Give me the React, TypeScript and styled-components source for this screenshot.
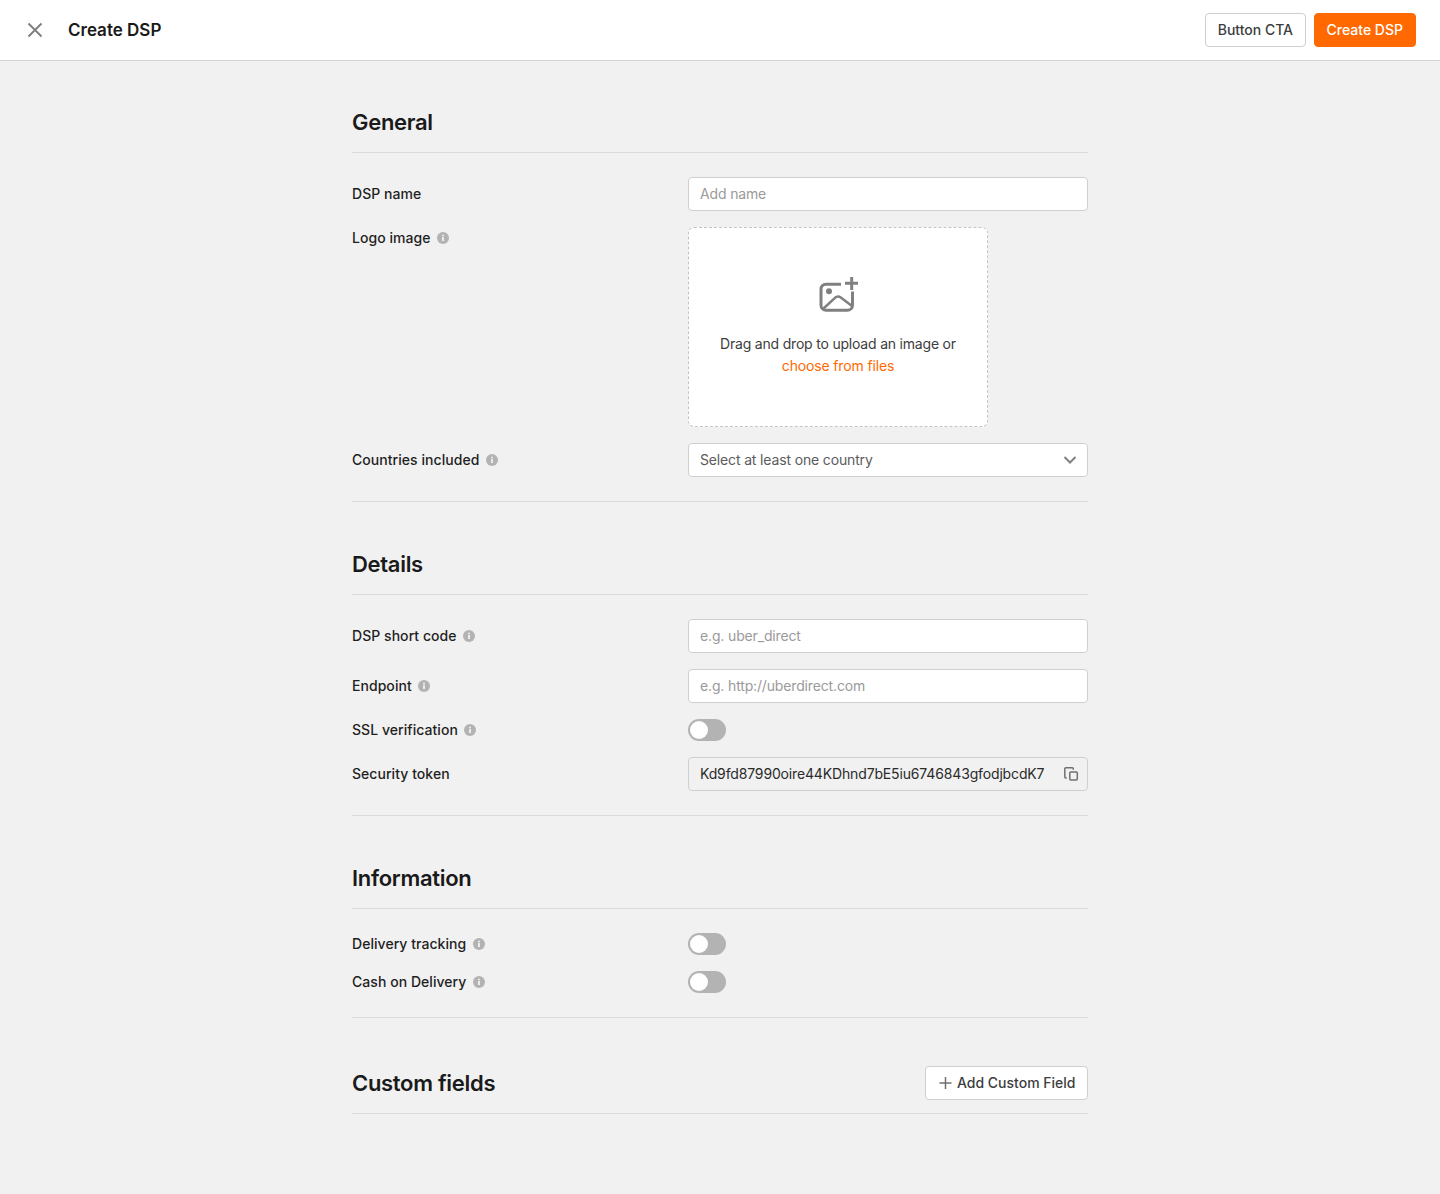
import React from "react";
import styled, { createGlobalStyle } from "styled-components";

const Global = createGlobalStyle`
  html, body { margin: 0; padding: 0; background: #f1f1f1; }
  body { font-family: Inter, "Liberation Sans", sans-serif; color: #1a1a1a; }
  * { box-sizing: border-box; }
`;

const Page = styled.div`
  min-height: 1194px;
  background: #f1f1f1;
`;

const TopBar = styled.header`
  height: 61px;
  background: #fff;
  border-bottom: 1px solid #d4d4d4;
  display: flex;
  align-items: center;
  padding: 0 24px;
`;

const CloseButton = styled.button`
  width: 22px;
  height: 22px;
  padding: 0;
  border: 0;
  background: none;
  display: flex;
  align-items: center;
  justify-content: center;
  margin-right: 22px;
`;

const PageTitle = styled.h1`
  margin: 0;
  flex: 1;
  font-size: 17px;
  line-height: 22px;
  font-weight: 600;
  color: #1a1a1a;
`;

const Actions = styled.div`
  display: flex;
  gap: 8px;
`;

const Button = styled.button<{ $primary?: boolean }>`
  height: 34px;
  padding: 0 ${(p) => (p.$primary ? 12 : 11.5)}px 1px;
  display: inline-flex;
  align-items: center;
  gap: 5px;
  border-radius: 4px;
  border: 1px solid ${(p) => (p.$primary ? "#ff6900" : "#cfcfcf")};
  background: ${(p) => (p.$primary ? "#ff6900" : "#fff")};
  color: ${(p) => (p.$primary ? "#fff" : "#3d3d3d")};
  font-family: inherit;
  font-size: 14px;
  font-weight: 500;
  white-space: nowrap;
`;

const PlusIcon = styled.svg`
  display: block;
  margin-top: 1px;
`;

const Main = styled.main`
  width: 736px;
  margin: 0 auto;
  padding-top: 46px;
`;

const Section = styled.section<{ $last?: boolean }>`
  padding-bottom: ${(p) => (p.$last ? 0 : 24)}px;
  margin-bottom: 47px;
  border-bottom: ${(p) => (p.$last ? "none" : "1px solid #dcdcdc")};
`;

const SectionHead = styled.div<{ $action?: boolean }>`
  display: flex;
  align-items: center;
  justify-content: space-between;
  padding-top: ${(p) => (p.$action ? 1 : 0)}px;
  padding-bottom: ${(p) => (p.$action ? 13 : 15)}px;
  border-bottom: 1px solid #dcdcdc;
`;

const SectionTitle = styled.h2`
  margin: 0;
  font-size: 22px;
  line-height: 30px;
  font-weight: 600;
  letter-spacing: -0.3px;
  color: #1a1a1a;
`;

const Rows = styled.div`
  margin-top: 24px;
  display: flex;
  flex-direction: column;
  gap: 16px;
`;

const Row = styled.div<{ $top?: boolean }>`
  display: grid;
  grid-template-columns: 336px 400px;
  align-items: ${(p) => (p.$top ? "start" : "center")};
`;

const Label = styled.label`
  display: flex;
  align-items: center;
  gap: 6.5px;
  font-size: 14px;
  line-height: 22px;
  font-weight: 500;
  letter-spacing: 0.05px;
  color: #1f1f1f;
`;

const InfoDot = styled.span`
  width: 12px;
  height: 12px;
  display: block;
`;

const Field = styled.div<{ $readonly?: boolean }>`
  height: 34px;
  display: flex;
  align-items: center;
  justify-content: space-between;
  padding: 0 8px 0 11px;
  border-radius: 4px;
  background: ${(p) => (p.$readonly ? "#f1f1f1" : "#fff")};
  border: 1px solid #cfcfcf;
  font-size: 14px;
`;

const tones = { placeholder: "#9a9a9a", muted: "#5c5c5c", value: "#2b2b2b" };

const FieldText = styled.span<{ $tone: keyof typeof tones }>`
  color: ${(p) => tones[p.$tone]};
  letter-spacing: -0.15px;
  line-height: 20px;
  padding-bottom: 1px;
`;

const Dropzone = styled.div`
  width: 300px;
  height: 200px;
  background: #fff;
  border: 1px dashed #c4c4c4;
  border-radius: 6px;
  display: flex;
  flex-direction: column;
  align-items: center;
  padding-top: 49px;
  font-size: 14px;
  line-height: 22px;
  letter-spacing: -0.2px;
  color: #3d3d3d;
  text-align: center;
`;

const DropIcon = styled.svg`
  display: block;
  margin-bottom: 20px;
  margin-left: 1px;
`;

const FileLink = styled.span`
  color: #ff6900;
  display: block;
  letter-spacing: -0.15px;
`;

const Toggle = styled.span`
  width: 38px;
  height: 22px;
  display: block;
  border-radius: 11px;
  background: #b3b3b3;
  padding: 2px;
`;

const Knob = styled.span`
  width: 18px;
  height: 18px;
  display: block;
  border-radius: 50%;
  background: #fff;
`;

const Info = () => (
  <InfoDot>
    <svg width="12" height="12" viewBox="0 0 12 12" style={{ display: "block" }}>
      <circle cx="6" cy="6" r="6" fill="#b3b3b3" />
      <rect x="5.25" y="5" width="1.5" height="4" fill="#fff" />
      <rect x="5.25" y="2.75" width="1.5" height="1.5" fill="#fff" />
    </svg>
  </InfoDot>
);

const Switch = () => (
  <Toggle>
    <Knob />
  </Toggle>
);

export default function App() {
  return (
    <Page>
      <Global />
      <TopBar>
        <CloseButton aria-label="Close">
          <svg width="22" height="22" viewBox="0 0 22 22" fill="none" stroke="#808080" strokeWidth="2">
            <path d="M4.5 4.5l13 13M17.5 4.5l-13 13" />
          </svg>
        </CloseButton>
        <PageTitle>Create DSP</PageTitle>
        <Actions>
          <Button>Button CTA</Button>
          <Button $primary>Create DSP</Button>
        </Actions>
      </TopBar>
      <Main>
        <Section>
          <SectionHead>
            <SectionTitle>General</SectionTitle>
          </SectionHead>
          <Rows>
            <Row>
              <Label>DSP name</Label>
              <Field>
                <FieldText $tone="placeholder">Add name</FieldText>
              </Field>
            </Row>
            <Row $top>
              <Label>
                Logo image <Info />
              </Label>
              <Dropzone>
                <DropIcon width="40" height="36" viewBox="0 0 40 36" fill="none" stroke="#808080" strokeWidth="3">
                  <path d="M22 7.2H7a5 5 0 0 0-5 5v16a5 5 0 0 0 5 5h21.500a5 5 0 0 0 5-5V14.500" />
                  <path d="M4.500 31.500L16 20.800c1.800-1.600 4-1.600 5.800-.2L33 29" strokeWidth="2.500" />
                  <circle cx="10" cy="14.300" r="3" fill="#808080" stroke="none" />
                  <path d="M32.700 0v13M26 6.300h13" />
                </DropIcon>
                <div>Drag and drop to upload an image or</div>
                <FileLink>choose from files</FileLink>
              </Dropzone>
            </Row>
            <Row>
              <Label>
                Countries included <Info />
              </Label>
              <Field>
                <FieldText $tone="muted">Select at least one country</FieldText>
                <svg width="14" height="8" viewBox="0 0 14 8" fill="none" stroke="#808080" strokeWidth="2" style={{ marginRight: 2 }}>
                  <path d="M1.500 1l5.500 5.500L12.500 1" />
                </svg>
              </Field>
            </Row>
          </Rows>
        </Section>

        <Section>
          <SectionHead>
            <SectionTitle>Details</SectionTitle>
          </SectionHead>
          <Rows>
            <Row>
              <Label>
                DSP short code <Info />
              </Label>
              <Field>
                <FieldText $tone="placeholder">e.g. uber_direct</FieldText>
              </Field>
            </Row>
            <Row>
              <Label>
                Endpoint <Info />
              </Label>
              <Field>
                <FieldText $tone="placeholder">e.g. http://uberdirect.com</FieldText>
              </Field>
            </Row>
            <Row>
              <Label>
                SSL verification <Info />
              </Label>
              <Switch />
            </Row>
            <Row>
              <Label>Security token</Label>
              <Field $readonly>
                <FieldText $tone="value">Kd9fd87990oire44KDhnd7bE5iu6746843gfodjbcdK7</FieldText>
                <svg width="16" height="16" viewBox="0 0 16 16" fill="none" stroke="#707070" strokeWidth="1.500">
                  <rect x="6.800" y="6" width="7.500" height="8" rx="1" />
                  <path d="M3.800 12h-1a1 1 0 0 1-1-1V2.800a1 1 0 0 1 1-1h6.500a1 1 0 0 1 1 1v1" />
                </svg>
              </Field>
            </Row>
          </Rows>
        </Section>

        <Section>
          <SectionHead>
            <SectionTitle>Information</SectionTitle>
          </SectionHead>
          <Rows>
            <Row>
              <Label>
                Delivery tracking <Info />
              </Label>
              <Switch />
            </Row>
            <Row>
              <Label>
                Cash on Delivery <Info />
              </Label>
              <Switch />
            </Row>
          </Rows>
        </Section>

        <Section $last>
          <SectionHead $action>
            <SectionTitle>Custom fields</SectionTitle>
            <Button>
              <PlusIcon width="14" height="14" viewBox="0 0 14 14" fill="none" stroke="#707070" strokeWidth="1.500">
                <path d="M7.500 1v12M1.500 7h12" />
              </PlusIcon>
              Add Custom Field
            </Button>
          </SectionHead>
        </Section>
      </Main>
    </Page>
  );
}
